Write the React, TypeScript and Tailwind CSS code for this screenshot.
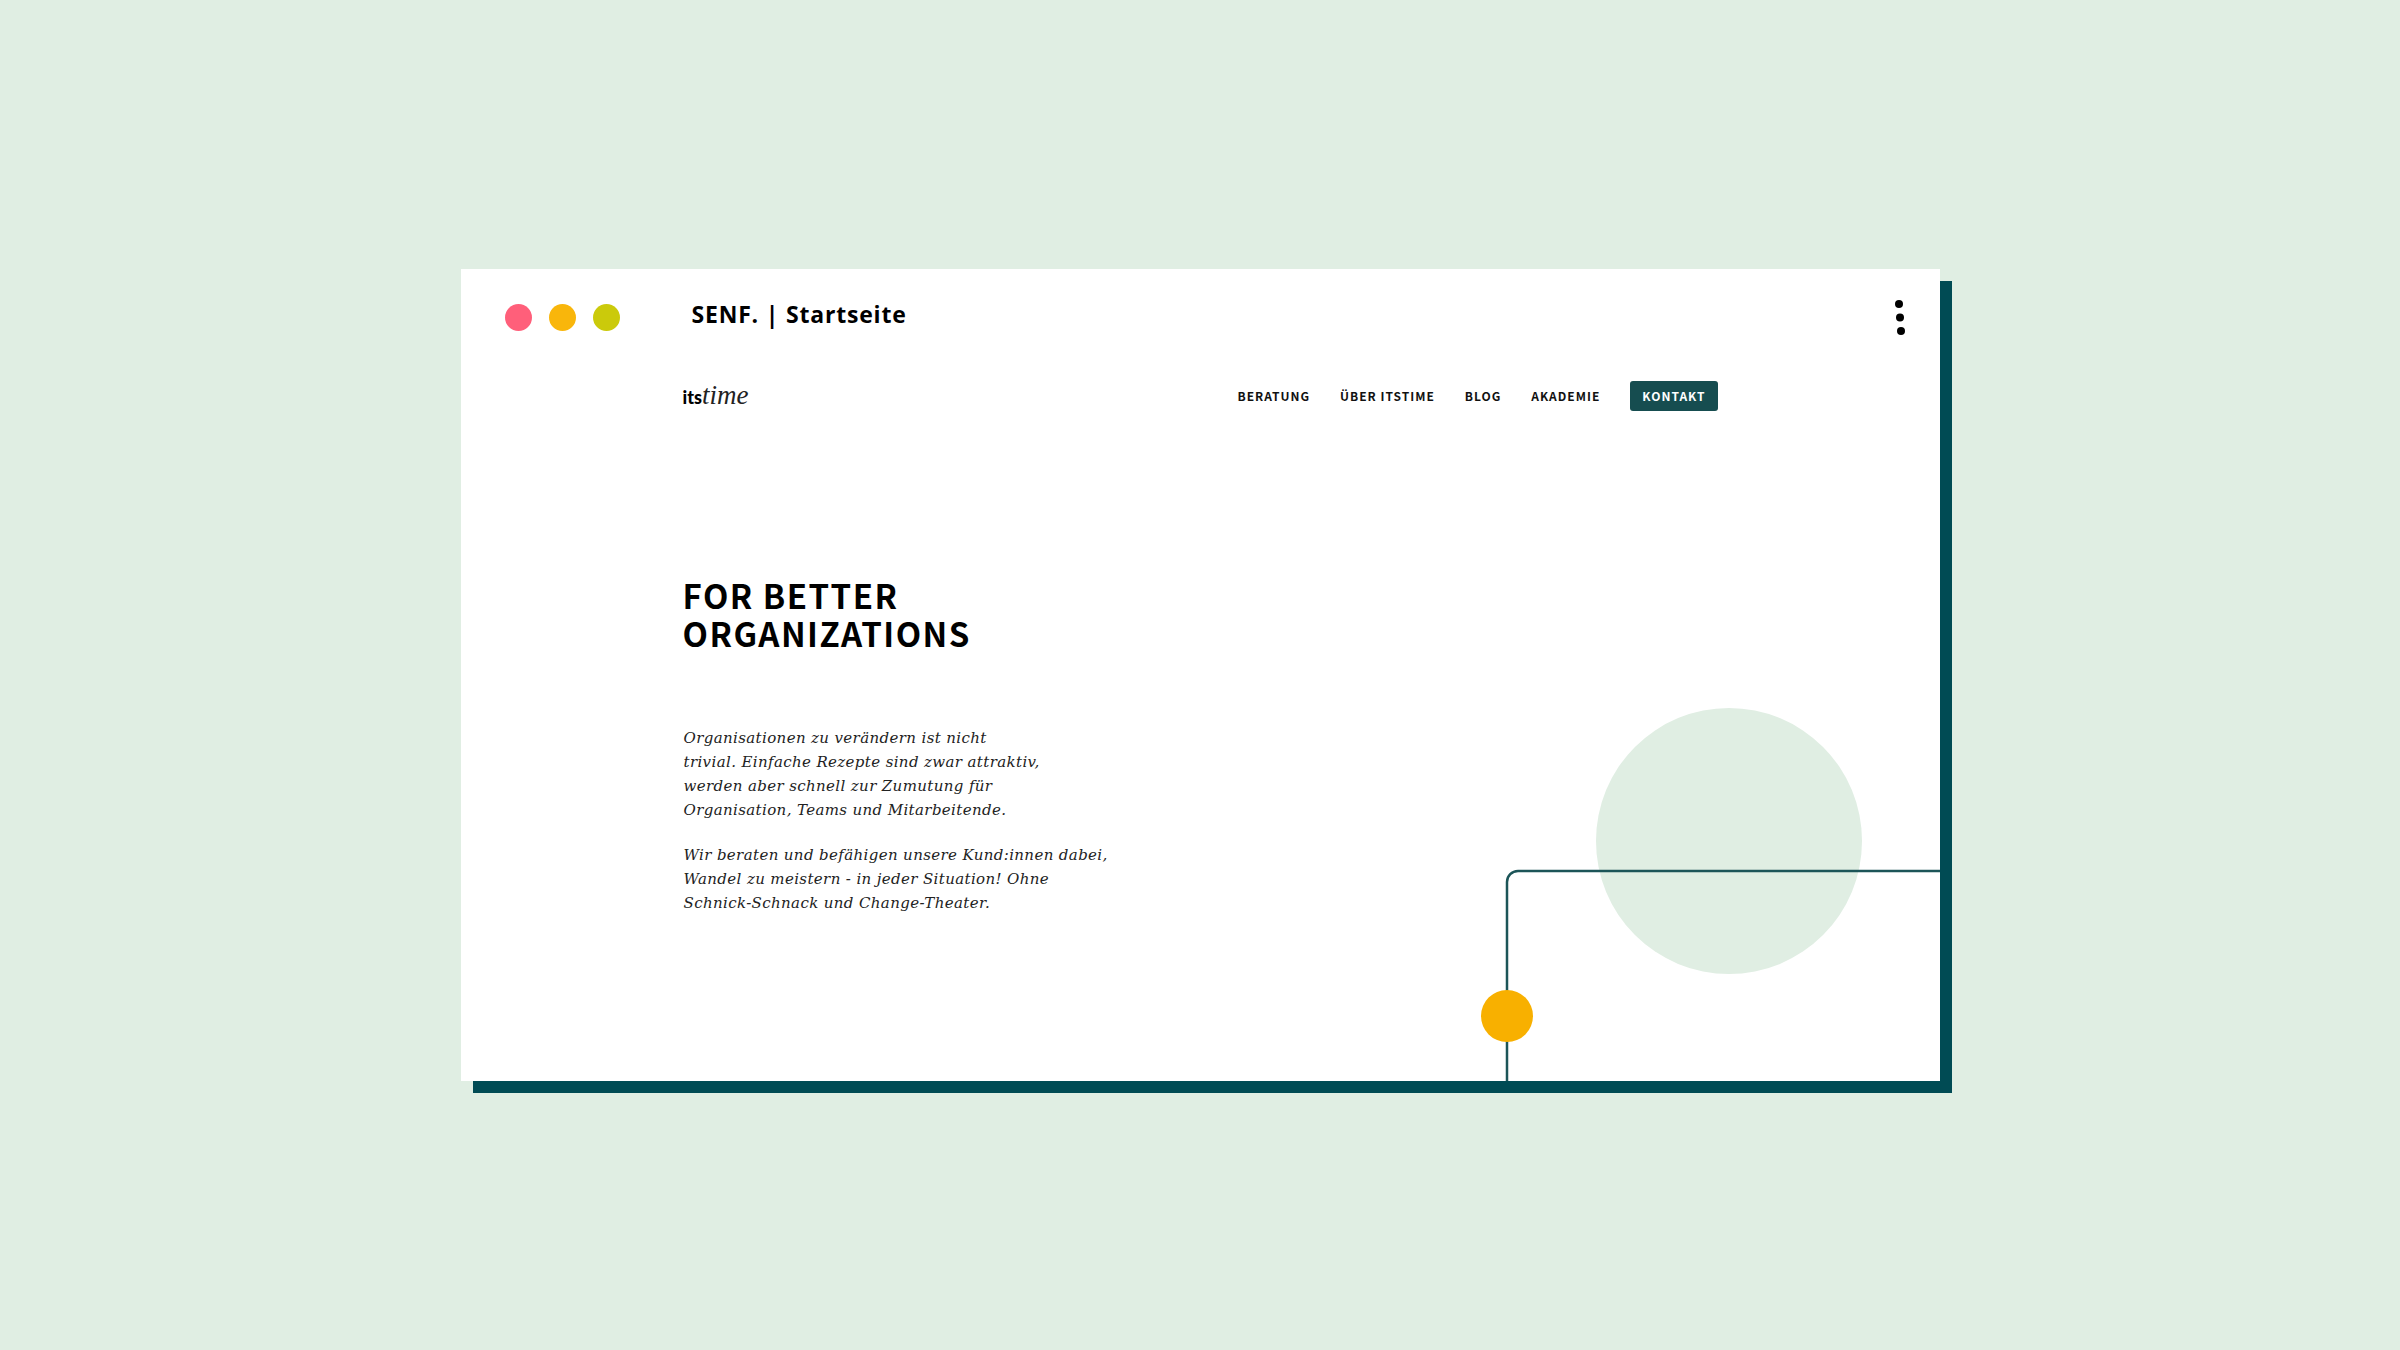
const trafficLights = [
  { label: 'Schließen', color: 'bg-[#ff5f7a]' },
  { label: 'Minimieren', color: 'bg-[#f9b60b]' },
  { label: 'Maximieren', color: 'bg-[#cbca0b]' },
];

const navLinks = ['BERATUNG', 'ÜBER ITSTIME', 'BLOG', 'AKADEMIE'];

function TitleBar() {
  return (
    <header className="flex items-start pt-[22px] pr-[33px] pl-11">
      <div className="flex gap-[17px] pt-[13px]">
        {trafficLights.map((light) => (
          <button
            key={light.label}
            type="button"
            aria-label={light.label}
            className={`size-[27px] rounded-full ${light.color}`}
          />
        ))}
      </div>
      <p className="ml-[72px] font-['Open_Sans','Noto_Sans',sans-serif] text-[23px] leading-[46px] font-bold tracking-[0.035em]">
        SENF. | Startseite
      </p>
      <button type="button" aria-label="Menü" className="mt-2 ml-auto">
        <svg width="14" height="38" viewBox="0 0 14 38" fill="#000">
          <circle cx="6" cy="5" r="4" />
          <circle cx="7" cy="18.5" r="4" />
          <circle cx="8" cy="32" r="4" />
        </svg>
      </button>
    </header>
  );
}

function SiteHeader() {
  return (
    <div className="mt-[42px] flex items-center justify-between">
      <a href="#start" aria-label="itstime" className="flex items-baseline leading-8">
        <span className="font-['Lato',sans-serif] text-[18px] font-black">its</span>
        <span className="font-['Liberation_Serif',serif] text-[27px] text-[#222] italic">time</span>
      </a>
      <nav className="flex items-center gap-[30px] font-['Noto_Sans_CJK_SC',sans-serif] text-[12px] leading-[30px] font-bold tracking-[1px]">
        {navLinks.map((label) => (
          <a key={label} href="#" className="text-[#111]">
            {label}
          </a>
        ))}
        <a href="#kontakt" className="rounded-[3px] bg-[#164d50] px-3 text-white">
          KONTAKT
        </a>
      </nav>
    </div>
  );
}

function Decoration() {
  return (
    <svg
      aria-hidden="true"
      className="pointer-events-none absolute right-0 bottom-0"
      width="460"
      height="373"
      viewBox="0 0 460 373"
      fill="none"
    >
      <circle cx="249" cy="133" r="133" fill="#e0eee3" />
      <path d="M27 373V174a11 11 0 0 1 11-11H460" stroke="#1c5558" strokeWidth="2.5" />
      <circle cx="27" cy="308" r="26" fill="#f8b000" />
    </svg>
  );
}

export default function App() {
  return (
    <div className="flex min-h-screen items-center justify-center bg-[#e0eee3] p-6">
      <div className="relative w-full max-w-[1479px] bg-white pb-[166px] text-black shadow-[12px_12px_0_0_#004b54]">
        <TitleBar />
        <Decoration />
        <div className="relative mx-auto max-w-[1035px]">
          <SiteHeader />
          <main>
            <h1 className="mt-[163px] font-['Noto_Sans_CJK_SC',sans-serif] text-[33px] leading-[38px] font-bold tracking-[0.045em]">
              FOR BETTER
              <br />
              ORGANIZATIONS
            </h1>
            <div className="mt-[74px] flex flex-col gap-[21px] pl-px font-['DejaVu_Serif',serif] text-[15px] leading-6 tracking-wide text-[#222] italic">
              <p>
                Organisationen zu verändern ist nicht
                <br />
                trivial. Einfache Rezepte sind zwar attraktiv,
                <br />
                werden aber schnell zur Zumutung für
                <br />
                Organisation, Teams und Mitarbeitende.
              </p>
              <p>
                Wir beraten und befähigen unsere Kund:innen dabei,
                <br />
                Wandel zu meistern - in jeder Situation! Ohne
                <br />
                Schnick-Schnack und Change-Theater.
              </p>
            </div>
          </main>
        </div>
      </div>
    </div>
  );
}
